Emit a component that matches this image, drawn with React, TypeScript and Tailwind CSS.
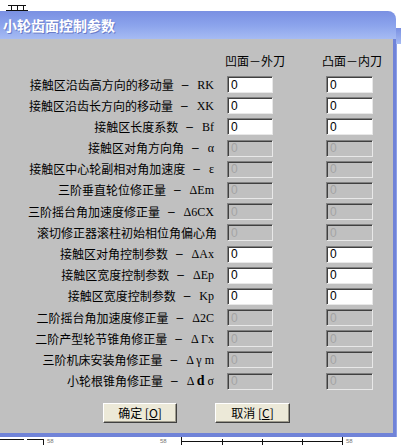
import React from "react";

type Row = { text: string; sym?: React.ReactNode; on: boolean };

const rows: Row[] = [
  { text: "接触区沿齿高方向的移动量", sym: "RK", on: true },
  { text: "接触区沿齿长方向的移动量", sym: "XK", on: true },
  { text: "接触区长度系数", sym: "Bf", on: true },
  { text: "接触区对角方向角", sym: "α", on: false },
  { text: "接触区中心轮副相对角加速度", sym: "ε", on: false },
  { text: "三阶垂直轮位修正量", sym: "ΔEm", on: false },
  { text: "三阶摇台角加速度修正量", sym: "Δ6CX", on: false },
  { text: "滚切修正器滚柱初始相位角偏心角", on: false },
  { text: "接触区对角控制参数", sym: "ΔAx", on: true },
  { text: "接触区宽度控制参数", sym: "ΔEp", on: true },
  { text: "接触区宽度控制参数", sym: "Kp", on: true },
  { text: "二阶摇台角加速度修正量", sym: "Δ2C", on: false },
  { text: "二阶产型轮节锥角修正量", sym: "Δ Γx", on: false },
  { text: "三阶机床安装角修正量", sym: "Δ γ m", on: false },
  {
    text: "小轮根锥角修正量",
    sym: (
      <>
        Δ <b className="text-[14px] font-bold">d</b> σ
      </>
    ),
    on: false,
  },
];

function Box({ on }: { on: boolean }) {
  if (on)
    return (
      <div className="h-[17px] border border-t-[#808080] border-l-[#808080] border-b-[#e8e8e8] border-r-[#e8e8e8] shadow-[inset_1px_1px_0_#404040] bg-white text-black flex items-center pl-[3px] text-[12px] leading-none font-['Liberation_Sans',sans-serif]">
        0
      </div>
    );
  return (
    <div className="h-[17px] border border-t-[#808080] border-l-[#808080] border-b-[#e8e8e8] border-r-[#e8e8e8] shadow-[inset_1px_1px_0_#404040] bg-[#c0c0c0] text-[#a4a4a4] flex items-center pl-[3px] text-[12px] leading-none font-['Liberation_Sans',sans-serif]">
      0
    </div>
  );
}

export default function App() {
  return (
    <div className="w-[401px] h-[445px] bg-white overflow-hidden relative font-['Liberation_Serif','Noto_Sans_CJK_SC',serif] text-black">
      {/* top strip with background drawing */}
      <div className="h-[11px] relative">
        <svg width="40" height="11" className="absolute left-0 top-0">
          <line x1="8" y1="5.5" x2="26" y2="5.5" stroke="#111" strokeWidth="1" />
          <line x1="6" y1="10.5" x2="28" y2="10.5" stroke="#111" strokeWidth="1" />
          <line x1="11.5" y1="5" x2="11.5" y2="10" stroke="#111" strokeWidth="1" />
          <line x1="17.5" y1="5" x2="17.5" y2="10" stroke="#111" strokeWidth="1" />
          <line x1="23.5" y1="5" x2="23.5" y2="10" stroke="#111" strokeWidth="1" />
        </svg>
      </div>

      <div className="flex">
        {/* dialog */}
        <div className="w-[396px] h-[426px] flex flex-col rounded-tr-[8px] overflow-hidden">
          <div className="h-[28px] flex items-center pl-[3px] bg-gradient-to-b from-[#7a90e2] via-[#8ba3ec] to-[#a6bbf3]">
            <span className="text-white text-[14px] font-bold leading-none font-['Noto_Sans_CJK_SC',sans-serif] [text-shadow:1px_1px_0_#6a7cc8]">
              小轮齿面控制参数
            </span>
          </div>
          <div className="flex-1 bg-[#c0c0c0] border-r-[3px] border-b-[4px] border-[#7083d8] flex flex-col pt-[16px]">
            {/* headers */}
            <div className="flex h-[12px] text-[12px] leading-[12px] font-['Noto_Sans_CJK_SC',sans-serif]">
              <span className="ml-[225px]">凹面－外刀</span>
              <span className="ml-[37px]">凸面－内刀</span>
            </div>
            {/* rows */}
            <div className="flex flex-col gap-[4.2px] mt-[9px]">
              {rows.map((r, i) => (
                <div key={i} className="flex items-center h-[17px]">
                  <div className="w-[217px] flex justify-end items-center text-[12px] leading-none whitespace-nowrap">
                    <span className="font-['Noto_Sans_CJK_SC',sans-serif]">{r.text}</span>
                    {r.sym !== undefined && (
                      <>
                        <span className="ml-[8px] font-['Liberation_Sans',sans-serif]">–</span>
                        <span className="ml-[9px] mr-[3px]">{r.sym}</span>
                      </>
                    )}
                  </div>
                  <div className="ml-[10px] w-[46px]">
                    <Box on={r.on} />
                  </div>
                  <div className="ml-[53px] w-[47px]">
                    <Box on={r.on} />
                  </div>
                </div>
              ))}
            </div>
            {/* buttons */}
            <div className="flex mt-[13px] pl-[103px] gap-[38px]">
              <button className="w-[74px] h-[20px] bg-[#ece9d8] border border-t-white border-l-white border-b-[#404040] border-r-[#404040] shadow-[inset_-1px_-1px_0_#9d9a8c] text-[12px] leading-none font-['Noto_Sans_CJK_SC',sans-serif] flex items-center justify-center">
                确定 [<span className="underline">O</span>]
              </button>
              <button className="w-[75px] h-[20px] bg-[#ece9d8] border border-t-white border-l-white border-b-[#404040] border-r-[#404040] shadow-[inset_-1px_-1px_0_#9d9a8c] text-[12px] leading-none font-['Noto_Sans_CJK_SC',sans-serif] flex items-center justify-center">
                取消 [<span className="underline">C</span>]
              </button>
            </div>
          </div>
        </div>
        {/* right strip: neighbouring window edge */}
        <div className="w-[5px] h-[426px] flex flex-col">
          <div className="h-[17px]" />
          <div className="h-[16px] bg-gradient-to-b from-[#7a90e2] to-[#a6bbf3]" />
          <div className="flex-1 border-l-[1px] border-[#8da0e6]" />
        </div>
      </div>

      {/* bottom strip with background drawing */}
      <div className="h-[8px] relative">
        <svg width="401" height="8" className="absolute left-0 top-0">
          <line x1="0" y1="2.5" x2="24" y2="2.5" stroke="#111" />
          <line x1="27" y1="2.5" x2="43" y2="2.5" stroke="#111" />
          <line x1="43.5" y1="2" x2="43.5" y2="8" stroke="#111" />
          <line x1="181.5" y1="0" x2="181.5" y2="8" stroke="#111" />
          <line x1="182" y1="4.5" x2="342" y2="4.5" stroke="#111" />
          <line x1="222.5" y1="2" x2="222.5" y2="8" stroke="#111" />
          <line x1="262.5" y1="2" x2="262.5" y2="8" stroke="#111" />
          <line x1="302.5" y1="2" x2="302.5" y2="8" stroke="#111" />
          <line x1="342.5" y1="0" x2="342.5" y2="8" stroke="#111" />
        </svg>
        <span className="absolute left-[47px] top-[1px] text-[6px] leading-[6px] text-[#777] font-['Liberation_Sans',sans-serif]">58</span>
        <span className="absolute left-[160px] top-[1px] text-[6px] leading-[6px] text-[#777] font-['Liberation_Sans',sans-serif]">58</span>
        <span className="absolute left-[346px] top-[1px] text-[6px] leading-[6px] text-[#777] font-['Liberation_Sans',sans-serif]">58</span>
      </div>
    </div>
  );
}
